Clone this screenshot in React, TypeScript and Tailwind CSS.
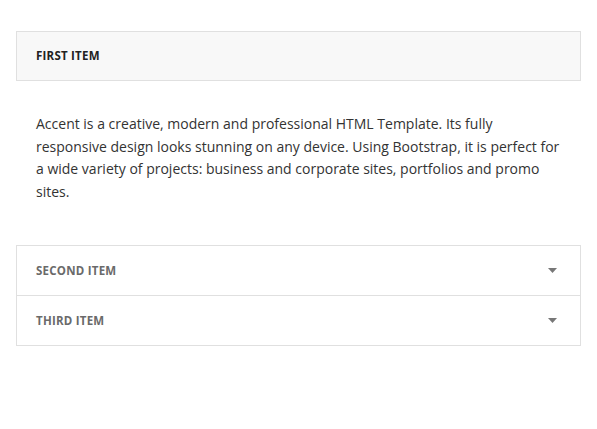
import React, { useState } from "react";

const items = [
  {
    title: "First Item",
    body: "Accent is a creative, modern and professional HTML Template. Its fully responsive design looks stunning on any device. Using Bootstrap, it is perfect for a wide variety of projects: business and corporate sites, portfolios and promo sites.",
  },
  { title: "Second Item", body: "" },
  { title: "Third Item", body: "" },
];

function Caret() {
  return (
    <svg width="9" height="5" viewBox="0 0 9 5" className="shrink-0">
      <path d="M0 0 H9 L4.5 5 Z" fill="#777" />
    </svg>
  );
}

export default function App() {
  const [open, setOpen] = useState(0);

  return (
    <div className="min-h-[429px] bg-white px-4 pt-[31px] font-['Open_Sans','Lato',sans-serif]">
      {/* First panel (open) */}
      <div className="border border-[#e0e0e0] bg-[#f8f8f8]">
        <button
          onClick={() => setOpen(open === 0 ? -1 : 0)}
          className="flex h-[48px] w-full items-center px-[19px] text-left text-[11.5px] font-bold uppercase tracking-[0.02em] text-[#222]"
        >
          {items[0].title}
        </button>
      </div>
      {open === 0 && (
        <p className="px-5 pt-[32px] pb-[42px] text-[14px] leading-[22.6px] text-[#333]">
          {items[0].body}
        </p>
      )}

      {/* Collapsed panels */}
      <div className="border border-[#e0e0e0]">
        {items.slice(1).map((item, idx) => (
          <button
            key={idx}
            onClick={() => setOpen(idx + 1)}
            className={`flex w-full items-center justify-between px-[19px] text-left text-[11.5px] font-bold uppercase tracking-[0.02em] text-[#6a6a6a] ${
              idx > 0 ? "h-[50px] border-t border-[#e0e0e0]" : "h-[49px]"
            }`}
          >
            <span>{item.title}</span>
            <span className="pr-[4px]">
              <Caret />
            </span>
          </button>
        ))}
      </div>
    </div>
  );
}
